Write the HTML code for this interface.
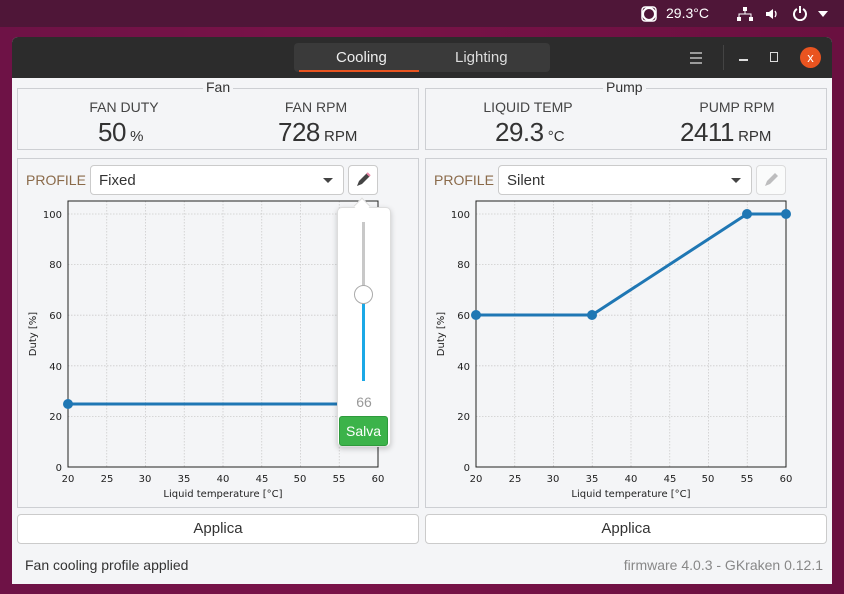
<!DOCTYPE html>
<html><head><style>
*{margin:0;padding:0;box-sizing:border-box}
body{width:844px;height:594px;overflow:hidden;position:relative;font-family:"Liberation Sans","DejaVu Sans",sans-serif;background:linear-gradient(90deg,#6e1246 0%,#7a1248 40%,#6a1040 100%)}
.top{position:absolute;left:0;top:0;width:844px;height:27px;background:#4f1638;color:#fff;font-size:14px}
.win{position:absolute;left:12px;top:37px;width:820px;height:547px;background:#f4f5f7;border-radius:6px 6px 0 0;overflow:hidden}
.tb{height:41px;background:#2c2c2c;position:relative}
.tabs{position:absolute;left:282px;top:6px;width:256px;height:29px;background:#3a3a3a;border-radius:4px;color:#eee;font-size:15px}
.abs{position:absolute}
.box{position:absolute;border:1px solid #cdcfd3;background:#f4f5f7}
.lbl{position:absolute;font-size:14px;color:#444;text-align:center}
.big{position:absolute;font-size:26px;color:#333;letter-spacing:-0.5px}
.big small{font-size:15px;letter-spacing:0}
.sel{position:absolute;height:30px;background:#fff;border:1px solid #cbcbcb;border-radius:4px;font-size:15px;color:#333;padding:6px 8px}
.btn{position:absolute;height:30px;background:#fff;border:1px solid #cbcbcb;border-radius:4px;font-size:15px;color:#333;text-align:center;line-height:28px}
</style></head><body>
<div class="top">
<svg class="abs" style="left:640px;top:5px" width="18" height="18"><circle cx="9" cy="9" r="6" fill="none" stroke="#fff" stroke-width="2"/><rect x="2" y="2" width="14" height="14" rx="3" fill="none" stroke="#fff" stroke-width="1.5"/></svg>
<span class="abs" style="left:666px;top:5px">29.3°C</span>
<svg class="abs" style="left:736px;top:6px" width="18" height="16"><rect x="7" y="1" width="4" height="4" fill="#fff"/><rect x="1" y="11" width="4" height="4" fill="#fff"/><rect x="13" y="11" width="4" height="4" fill="#fff"/><path d="M9 5v3M3 11V8h12v3" stroke="#fff" fill="none"/></svg>
<svg class="abs" style="left:765px;top:7px" width="14" height="14"><path d="M1 5h3l4-3v10l-4-3H1z" fill="#fff"/><path d="M10 4q2 3 0 6" stroke="#fff" fill="none" stroke-width="1.3"/></svg>
<svg class="abs" style="left:792px;top:5px" width="16" height="16"><path d="M5 4a6 6 0 1 0 6 0" stroke="#fff" stroke-width="2" fill="none"/><path d="M8 1v7" stroke="#fff" stroke-width="2"/></svg>
<svg class="abs" style="left:818px;top:11px" width="10" height="6"><path d="M0 0h10L5 6z" fill="#fff"/></svg>
</div>
<div class="win">
<div class="tb">
<div class="tabs"><span class="abs" style="left:42px;top:6px">Cooling</span><span class="abs" style="left:161px;top:6px;color:#ddd">Lighting</span><div class="abs" style="left:5px;top:27px;width:120px;height:2px;background:#e95420"></div></div>
<svg class="abs" style="left:678px;top:15px" width="12" height="12"><path d="M0 1h12M0 6h12M0 11h12" stroke="#ddd" stroke-width="1.3"/></svg>
<div class="abs" style="left:711px;top:8px;width:1px;height:25px;background:#444"></div>
<div class="abs" style="left:727px;top:22px;width:9px;height:1.5px;background:#ddd"></div>
<div class="abs" style="left:758px;top:15px;width:8px;height:10px;border:1.5px solid #ddd"></div>
<div class="abs" style="left:788px;top:10px;width:21px;height:21px;border-radius:50%;background:#e95420;color:#fff;font-size:13px;text-align:center;line-height:21px">x</div>
</div>
</div>
<div class="box" style="left:17px;top:88px;width:402px;height:62px"></div>
<div class="box" style="left:425px;top:88px;width:402px;height:62px"></div>
<div class="abs" style="left:203px;top:79px;background:#f4f5f7;padding:0 3px;font-size:14px;color:#333">Fan</div>
<div class="abs" style="left:603px;top:79px;background:#f4f5f7;padding:0 3px;font-size:14px;color:#333">Pump</div>
<div class="lbl" style="left:64px;top:99px;width:120px">FAN DUTY</div>
<div class="lbl" style="left:256px;top:99px;width:120px">FAN RPM</div>
<div class="lbl" style="left:468px;top:99px;width:120px">LIQUID TEMP</div>
<div class="lbl" style="left:677px;top:99px;width:120px">PUMP RPM</div>
<div class="big" style="left:98px;top:117px">50<small> %</small></div>
<div class="big" style="left:278px;top:117px">728<small> RPM</small></div>
<div class="big" style="left:495px;top:117px">29.3<small> °C</small></div>
<div class="big" style="left:680px;top:117px">2411<small> RPM</small></div>
<div class="box" style="left:17px;top:158px;width:402px;height:350px"></div>
<div class="box" style="left:425px;top:158px;width:402px;height:350px"></div>
<div class="abs" style="left:26px;top:172px;font-size:14px;color:#8a6a4a">PROFILE</div>
<div class="abs" style="left:434px;top:172px;font-size:14px;color:#8a6a4a">PROFILE</div>
<div class="sel" style="left:90px;top:165px;width:254px">Fixed<svg class="abs" style="right:10px;top:12px" width="10" height="5"><path d="M0 0h10L5 5z" fill="#444"/></svg></div>
<div class="sel" style="left:498px;top:165px;width:254px">Silent<svg class="abs" style="right:10px;top:12px" width="10" height="5"><path d="M0 0h10L5 5z" fill="#444"/></svg></div>
<div class="btn" style="left:348px;top:165px;width:30px"><svg width="18" height="18" style="margin-top:5px"><path d="M3 15l2-5 8-8 3 3-8 8z" fill="#444"/><path d="M13 2l3 3" stroke="#e8a" stroke-width="2"/></svg></div>
<div class="btn" style="left:756px;top:165px;width:30px;opacity:.6"><svg width="18" height="18" style="margin-top:5px"><path d="M3 15l2-5 8-8 3 3-8 8z" fill="#999"/></svg></div>
<svg class="abs" style="left:0;top:0" width="844" height="594" font-family="DejaVu Sans,sans-serif" font-size="10">
<g stroke="#ccc" stroke-dasharray="1.5,1.5" stroke-width="0.8">
<path d="M106.75 201V467M145.5 201V467M184.25 201V467M223 201V467M261.75 201V467M300.5 201V467M339.25 201V467M68 214H378M68 264.6H378M68 315.2H378M68 365.8H378M68 416.4H378"/>
<path d="M514.75 201V467M553.5 201V467M592.25 201V467M631 201V467M669.75 201V467M708.5 201V467M747.25 201V467M476 214H786M476 264.6H786M476 315.2H786M476 365.8H786M476 416.4H786"/>
</g>
<rect x="68" y="201" width="310" height="266" fill="none" stroke="#222"/>
<rect x="476" y="201" width="310" height="266" fill="none" stroke="#222"/>
<g fill="#222" text-anchor="end">
<text x="62" y="218">100</text><text x="62" y="268">80</text><text x="62" y="319">60</text><text x="62" y="370">40</text><text x="62" y="420">20</text><text x="62" y="471">0</text>
<text x="470" y="218">100</text><text x="470" y="268">80</text><text x="470" y="319">60</text><text x="470" y="370">40</text><text x="470" y="420">20</text><text x="470" y="471">0</text>
</g>
<g fill="#222" text-anchor="middle">
<text x="68" y="482">20</text><text x="107" y="482">25</text><text x="145" y="482">30</text><text x="184" y="482">35</text><text x="223" y="482">40</text><text x="262" y="482">45</text><text x="300" y="482">50</text><text x="339" y="482">55</text><text x="378" y="482">60</text>
<text x="476" y="482">20</text><text x="515" y="482">25</text><text x="553" y="482">30</text><text x="592" y="482">35</text><text x="631" y="482">40</text><text x="670" y="482">45</text><text x="708" y="482">50</text><text x="747" y="482">55</text><text x="786" y="482">60</text>
<text x="223" y="497">Liquid temperature [°C]</text><text x="631" y="497">Liquid temperature [°C]</text>
<text transform="translate(36,334) rotate(-90)">Duty [%]</text><text transform="translate(444,334) rotate(-90)">Duty [%]</text>
</g>
<path d="M68 404H378" stroke="#1f77b4" stroke-width="3"/><circle cx="68" cy="404" r="5" fill="#1f77b4"/>
<path d="M476 315H592L747 214H786" stroke="#1f77b4" stroke-width="3" fill="none"/>
<g fill="#1f77b4"><circle cx="476" cy="315" r="5"/><circle cx="592" cy="315" r="5"/><circle cx="747" cy="214" r="5"/><circle cx="786" cy="214" r="5"/></g>
</svg>
<div class="abs" style="left:337px;top:207px;width:54px;height:240px;background:#fff;border:1px solid #ddd;border-radius:5px;box-shadow:0 2px 6px rgba(0,0,0,.2)"></div>
<div class="abs" style="left:356px;top:200px;width:12px;height:12px;background:#fff;transform:rotate(45deg);border-left:1px solid #ddd;border-top:1px solid #ddd"></div>
<div class="abs" style="left:362px;top:222px;width:3px;height:72px;background:#c8c8c8"></div>
<div class="abs" style="left:362px;top:294px;width:3px;height:87px;background:#1ba8e6"></div>
<div class="abs" style="left:354px;top:285px;width:19px;height:19px;border-radius:50%;background:#fff;border:1px solid #aaa"></div>
<div class="abs" style="left:337px;top:394px;width:54px;text-align:center;font-size:14px;color:#999">66</div>
<div class="abs" style="left:339px;top:416px;width:49px;height:30px;background:#3cb34a;border:1px solid #2e9a3c;border-radius:3px;color:#fff;font-size:14px;text-align:center;line-height:28px">Salva</div>
<div class="btn" style="left:17px;top:514px;width:402px">Applica</div>
<div class="btn" style="left:425px;top:514px;width:402px">Applica</div>
<div class="abs" style="left:25px;top:557px;font-size:14px;color:#333">Fan cooling profile applied</div>
<div class="abs" style="right:21px;top:557px;font-size:14px;color:#888">firmware 4.0.3 - GKraken 0.12.1</div>
</body></html>
